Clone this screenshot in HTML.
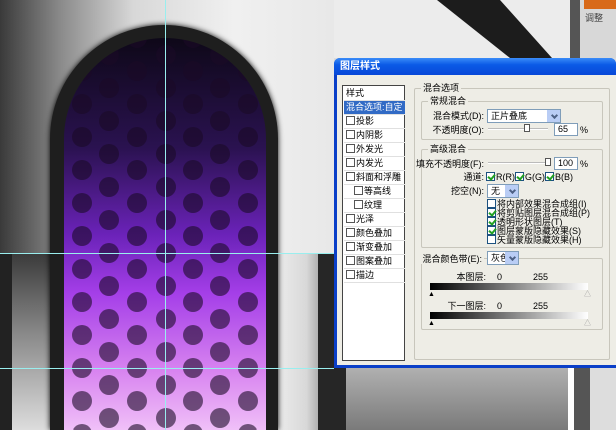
<!DOCTYPE html>
<html style="width:616px;height:430px;overflow:hidden"><head><meta charset="utf-8"><style>
*{margin:0;padding:0;box-sizing:border-box}
body{width:616px;height:430px;overflow:hidden;position:relative;background:#ddd;font-family:"Liberation Sans","Noto Sans CJK SC",sans-serif;font-size:9px;color:#000}
.a{position:absolute}
.t{position:absolute;white-space:nowrap;font-size:9px;line-height:10px}
.r{position:absolute;white-space:nowrap;font-size:9px;line-height:10px;text-align:right}
.cb{position:absolute;width:9px;height:9px;border:1px solid #1c5180;background:#fff}
.cb.k::after{content:"";position:absolute;left:2px;top:0px;width:3px;height:5px;border:solid #21a121;border-width:0 2px 2px 0;transform:rotate(40deg)}
.sel{position:absolute;height:14px;border:1px solid #7f9db9;background:#fff;font-size:9px;line-height:12px;padding-left:3px}
.sel::after{content:"";position:absolute;right:0;top:0;width:13px;height:12px;background:#b9cdf5}
.sel i{position:absolute;right:3px;top:3px;width:5px;height:5px;border:solid #4d6185;border-width:0 2px 2px 0;transform:rotate(45deg);z-index:2}
.grp{position:absolute;border:1px solid #c8c6bc;border-radius:2px}
.lg{position:absolute;background:#eeede6;padding:0 2px;font-size:9px;line-height:10px;top:-6px;left:6px}
.li{position:absolute;left:1px;width:61px;height:14px;border-bottom:1px solid #e0e0e0;font-size:9px;line-height:13px;padding-left:2px}
.li .cb{position:relative;display:inline-block;vertical-align:-1px;margin-right:1px;width:9px;height:9px;border:1px solid #555}
</style></head><body>
<div class="a" style="left:0;top:0;width:616px;height:430px;overflow:hidden">
<div class="a" style="left:0;top:0;width:334px;height:253px;background:linear-gradient(90deg,#3a3a3a 0%,#8a8a8a 18%,#d8d8d8 40%,#f0f0f0 70%,#e8e8e8 100%)"></div>
<div class="a" style="left:0;top:253px;width:12px;height:177px;background:#222"></div>
<div class="a" style="left:12px;top:253px;width:40px;height:177px;background:linear-gradient(180deg,#3a3a3a,#888 45%,#ddd)"></div>
<div class="a" style="left:275px;top:253px;width:45px;height:177px;background:linear-gradient(90deg,#eee,#d8d8d8 70%,#aaa)"></div>
<div class="a" style="left:318px;top:253px;width:16px;height:177px;background:#262626"></div>
<div class="a" style="left:50px;top:25px;width:228px;height:405px;border-radius:114px 114px 0 0;background:#1e1e1e;box-shadow:0 0 6px #000"></div>
<div class="a" style="left:64px;top:38px;width:202px;height:392px;border-radius:101px 101px 0 0;background:linear-gradient(180deg,#0e0818 0%,#2a1250 28%,#6a22b8 50%,#a43ee8 65%,#d884f0 85%,#f0c0f8 100%)"></div>
<svg class="a" style="left:0;top:0" width="334" height="430">
<defs><clipPath id="c"><rect x="64" y="38" width="202" height="450" rx="101"/></clipPath></defs>
<g clip-path="url(#c)" fill="#1a0a26" fill-opacity="0.6">
<circle cx="82" cy="38" r="10"/><circle cx="82" cy="71" r="10"/><circle cx="82" cy="104" r="10"/><circle cx="82" cy="137" r="10"/><circle cx="82" cy="170" r="10"/><circle cx="82" cy="203" r="10"/><circle cx="82" cy="236" r="10"/><circle cx="82" cy="269" r="10"/><circle cx="82" cy="302" r="10"/><circle cx="82" cy="335" r="10"/><circle cx="82" cy="368" r="10"/><circle cx="82" cy="401" r="10"/><circle cx="82" cy="434" r="10"/>
<circle cx="109" cy="55" r="10"/><circle cx="109" cy="88" r="10"/><circle cx="109" cy="121" r="10"/><circle cx="109" cy="154" r="10"/><circle cx="109" cy="187" r="10"/><circle cx="109" cy="220" r="10"/><circle cx="109" cy="253" r="10"/><circle cx="109" cy="286" r="10"/><circle cx="109" cy="319" r="10"/><circle cx="109" cy="352" r="10"/><circle cx="109" cy="385" r="10"/><circle cx="109" cy="418" r="10"/>
<circle cx="137" cy="38" r="10"/><circle cx="137" cy="71" r="10"/><circle cx="137" cy="104" r="10"/><circle cx="137" cy="137" r="10"/><circle cx="137" cy="170" r="10"/><circle cx="137" cy="203" r="10"/><circle cx="137" cy="236" r="10"/><circle cx="137" cy="269" r="10"/><circle cx="137" cy="302" r="10"/><circle cx="137" cy="335" r="10"/><circle cx="137" cy="368" r="10"/><circle cx="137" cy="401" r="10"/><circle cx="137" cy="434" r="10"/>
<circle cx="166" cy="55" r="10"/><circle cx="166" cy="88" r="10"/><circle cx="166" cy="121" r="10"/><circle cx="166" cy="154" r="10"/><circle cx="166" cy="187" r="10"/><circle cx="166" cy="220" r="10"/><circle cx="166" cy="253" r="10"/><circle cx="166" cy="286" r="10"/><circle cx="166" cy="319" r="10"/><circle cx="166" cy="352" r="10"/><circle cx="166" cy="385" r="10"/><circle cx="166" cy="418" r="10"/>
<circle cx="193" cy="38" r="10"/><circle cx="193" cy="71" r="10"/><circle cx="193" cy="104" r="10"/><circle cx="193" cy="137" r="10"/><circle cx="193" cy="170" r="10"/><circle cx="193" cy="203" r="10"/><circle cx="193" cy="236" r="10"/><circle cx="193" cy="269" r="10"/><circle cx="193" cy="302" r="10"/><circle cx="193" cy="335" r="10"/><circle cx="193" cy="368" r="10"/><circle cx="193" cy="401" r="10"/><circle cx="193" cy="434" r="10"/>
<circle cx="220" cy="55" r="10"/><circle cx="220" cy="88" r="10"/><circle cx="220" cy="121" r="10"/><circle cx="220" cy="154" r="10"/><circle cx="220" cy="187" r="10"/><circle cx="220" cy="220" r="10"/><circle cx="220" cy="253" r="10"/><circle cx="220" cy="286" r="10"/><circle cx="220" cy="319" r="10"/><circle cx="220" cy="352" r="10"/><circle cx="220" cy="385" r="10"/><circle cx="220" cy="418" r="10"/>
<circle cx="248" cy="38" r="10"/><circle cx="248" cy="71" r="10"/><circle cx="248" cy="104" r="10"/><circle cx="248" cy="137" r="10"/><circle cx="248" cy="170" r="10"/><circle cx="248" cy="203" r="10"/><circle cx="248" cy="236" r="10"/><circle cx="248" cy="269" r="10"/><circle cx="248" cy="302" r="10"/><circle cx="248" cy="335" r="10"/><circle cx="248" cy="368" r="10"/><circle cx="248" cy="401" r="10"/><circle cx="248" cy="434" r="10"/>
</g>
<rect x="165" y="0" width="1" height="430" fill="#9ee"/>
<rect x="0" y="253" width="334" height="1" fill="#9ee"/>
<rect x="0" y="368" width="334" height="1" fill="#9ee"/>
</svg>
<svg class="a" style="left:334px;top:0" width="236" height="58">
<rect width="236" height="58" fill="#ececec"/>
<polygon points="103,0 166,0 218,58 176,58" fill="#1c1c1c"/>
</svg>
<div class="a" style="left:570px;top:0;width:10px;height:58px;background:#555"></div>
<div class="a" style="left:580px;top:0;width:36px;height:58px;background:#d8d8d8"></div>
<div class="a" style="left:584px;top:0;width:32px;height:9px;background:#d86a1a"></div>
<div class="t" style="left:585px;top:13px;color:#444">调整</div>
<div class="a" style="left:334px;top:368px;width:12px;height:62px;background:#262626"></div>
<div class="a" style="left:346px;top:368px;width:222px;height:62px;background:linear-gradient(180deg,#b0b0b0,#7a7a7a)"></div>
<div class="a" style="left:568px;top:368px;width:6px;height:62px;background:#fff"></div>
<div class="a" style="left:574px;top:368px;width:16px;height:62px;background:#555"></div>
<div class="a" style="left:590px;top:368px;width:26px;height:62px;background:#ddd"></div>
<div class="a" style="left:334px;top:58px;width:282px;height:310px;background:#0a3fc8;border-radius:6px 6px 0 0"></div>
<div class="a" style="left:334px;top:58px;width:282px;height:17px;background:linear-gradient(180deg,#3a8cf8,#0b5ae6 40%,#0848d8);border-radius:6px 6px 0 0"></div>
<div class="t" style="left:340px;top:62px;color:#fff;font-weight:bold;font-size:10px">图层样式</div>
<div class="a" style="left:337px;top:75px;width:279px;height:290px;background:#eeede6"></div>
<div class="a" style="left:342px;top:85px;width:63px;height:276px;background:#fff;border:1px solid #444">
<div class="li" style="top:1px">样式</div>
<div class="li" style="top:15px;background:#316ac5;color:#fff">混合选项:自定</div>
<div class="li" style="top:29px"><span class="cb"></span>投影</div>
<div class="li" style="top:43px"><span class="cb"></span>内阴影</div>
<div class="li" style="top:57px"><span class="cb"></span>外发光</div>
<div class="li" style="top:71px"><span class="cb"></span>内发光</div>
<div class="li" style="top:85px"><span class="cb"></span>斜面和浮雕</div>
<div class="li" style="top:99px;padding-left:10px"><span class="cb"></span>等高线</div>
<div class="li" style="top:113px;padding-left:10px"><span class="cb"></span>纹理</div>
<div class="li" style="top:127px"><span class="cb"></span>光泽</div>
<div class="li" style="top:141px"><span class="cb"></span>颜色叠加</div>
<div class="li" style="top:155px"><span class="cb"></span>渐变叠加</div>
<div class="li" style="top:169px"><span class="cb"></span>图案叠加</div>
<div class="li" style="top:183px"><span class="cb"></span>描边</div>
</div>
<div class="grp" style="left:414px;top:88px;width:196px;height:272px"><div class="lg">混合选项</div></div>
<div class="grp" style="left:421px;top:101px;width:182px;height:39px"><div class="lg">常规混合</div></div>
<div class="r" style="right:132px;top:111px">混合模式(D):</div>
<div class="sel" style="left:487px;top:109px;width:74px">正片叠底<i></i></div>
<div class="r" style="right:132px;top:125px">不透明度(O):</div>
<div class="a" style="left:488px;top:128px;width:60px;height:2px;background:#bbb;border-bottom:1px solid #fff"></div>
<div class="a" style="left:524px;top:124px;width:6px;height:8px;background:#fff;border:1px solid #555"></div>
<div class="a" style="left:554px;top:123px;width:24px;height:13px;background:#fff;border:1px solid #7f9db9;font-size:9px;line-height:11px;padding-left:3px">65</div>
<div class="t" style="left:580px;top:125px">%</div>
<div class="grp" style="left:421px;top:149px;width:182px;height:99px"><div class="lg">高级混合</div></div>
<div class="r" style="right:132px;top:159px">填充不透明度(F):</div>
<div class="a" style="left:488px;top:162px;width:60px;height:2px;background:#bbb;border-bottom:1px solid #fff"></div>
<div class="a" style="left:545px;top:158px;width:6px;height:8px;background:#fff;border:1px solid #555"></div>
<div class="a" style="left:554px;top:157px;width:24px;height:13px;background:#fff;border:1px solid #7f9db9;font-size:9px;line-height:11px;padding-left:3px">100</div>
<div class="t" style="left:580px;top:159px">%</div>
<div class="r" style="right:132px;top:172px">通道:</div>
<div class="cb k" style="left:486px;top:172px"></div><div class="t" style="left:496px;top:172px">R(R)</div>
<div class="cb k" style="left:515px;top:172px"></div><div class="t" style="left:525px;top:172px">G(G)</div>
<div class="cb k" style="left:545px;top:172px"></div><div class="t" style="left:555px;top:172px">B(B)</div>
<div class="r" style="right:132px;top:186px">挖空(N):</div>
<div class="sel" style="left:487px;top:184px;width:32px">无<i></i></div>
<div class="cb" style="left:487px;top:199px"></div><div class="t" style="left:497px;top:199px">将内部效果混合成组(I)</div>
<div class="cb k" style="left:487px;top:208px"></div><div class="t" style="left:497px;top:208px">将剪贴图层混合成组(P)</div>
<div class="cb k" style="left:487px;top:217px"></div><div class="t" style="left:497px;top:217px">透明形状图层(T)</div>
<div class="cb k" style="left:487px;top:226px"></div><div class="t" style="left:497px;top:226px">图层蒙版隐藏效果(S)</div>
<div class="cb" style="left:487px;top:235px"></div><div class="t" style="left:497px;top:235px">矢量蒙版隐藏效果(H)</div>
<div class="grp" style="left:421px;top:258px;width:182px;height:72px"></div>
<div class="r" style="right:132px;top:254px;background:#eeede6;padding:0 2px">混合颜色带(E):</div>
<div class="sel" style="left:487px;top:251px;width:32px">灰色<i></i></div>
<div class="r" style="right:130px;top:272px">本图层:</div>
<div class="t" style="left:497px;top:272px">0</div>
<div class="t" style="left:533px;top:272px">255</div>
<div class="a" style="left:430px;top:283px;width:158px;height:7px;background:linear-gradient(90deg,#000,#fff)"></div>
<div class="t" style="left:428px;top:290px;font-size:7px">▲</div>
<div class="t" style="left:584px;top:290px;font-size:7px;color:#999">△</div>
<div class="r" style="right:130px;top:301px">下一图层:</div>
<div class="t" style="left:497px;top:301px">0</div>
<div class="t" style="left:533px;top:301px">255</div>
<div class="a" style="left:430px;top:312px;width:158px;height:7px;background:linear-gradient(90deg,#000,#fff)"></div>
<div class="t" style="left:428px;top:319px;font-size:7px">▲</div>
<div class="t" style="left:584px;top:319px;font-size:7px;color:#999">△</div>
</div>
</body></html>
